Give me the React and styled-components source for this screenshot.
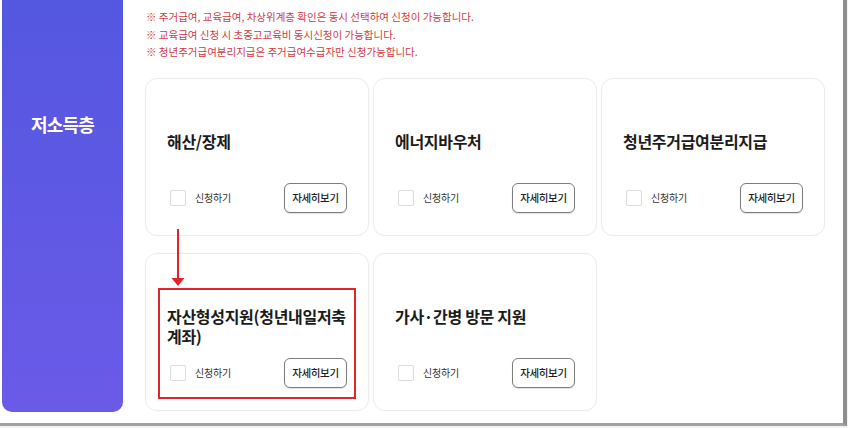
import React from 'react'
import styled, { createGlobalStyle } from 'styled-components'

const GlobalStyle = createGlobalStyle`
  html, body {
    margin: 0;
    padding: 0;
    background: #f2f2f2;
  }
  body {
    font-family: "Noto Sans CJK KR", "Noto Sans", sans-serif;
  }
`

const Frame = styled.div`
  width: 841px;
  height: 423px;
  display: flex;
  align-items: flex-start;
  gap: 22px;
  padding-left: 2px;
  background: #fff;
  border-right: 4px solid #8e8e8e;
  border-bottom: 3px solid #a2a2a2;
  overflow: hidden;
`

const Side = styled.aside`
  width: 121px;
  height: 412px;
  flex-shrink: 0;
  box-sizing: border-box;
  padding-top: 112px;
  border-radius: 0 0 10px 10px;
  background: linear-gradient(180deg, #5457e0 0%, #6a5ae8 100%);
  color: #fff;
  text-align: center;
  font-size: 18px;
  font-weight: 700;
  letter-spacing: -0.8px;
  line-height: 24px;
`

const Main = styled.section`
  flex: 1;
  padding-top: 8px;
`

const Notes = styled.ul`
  list-style: none;
  margin: 0 0 17px;
  padding: 0 0 0 1px;
  color: #d23a44;
  font-size: 10.5px;
  line-height: 17.5px;
  letter-spacing: 0;
`

const Board = styled.div`
  position: relative;
  width: 680px;
  display: grid;
  grid-template-columns: repeat(3, 1fr);
  grid-auto-rows: 158px;
  column-gap: 4px;
  row-gap: 17px;
`

const Card = styled.div`
  position: relative;
  box-sizing: border-box;
  display: flex;
  flex-direction: column;
  justify-content: space-between;
  padding: 52px 21px 22px 21px;
  background: #fff;
  border: 1px solid #ececec;
  border-radius: 12px;
  box-shadow: 0 0 2px rgba(0, 0, 0, 0.03);
`

const Title = styled.h3`
  margin: 0;
  color: #1b1b1b;
  font-size: 16px;
  font-weight: 700;
  line-height: 20px;
  letter-spacing: -0.3px;
`

const Footer = styled.div`
  display: flex;
  align-items: center;
  justify-content: space-between;
`

const Check = styled.label`
  display: flex;
  align-items: center;
  gap: 9px;
  padding-left: 3px;
  color: #333;
  font-size: 10px;
  letter-spacing: -0.2px;
`

const Box = styled.span`
  width: 16px;
  height: 16px;
  box-sizing: border-box;
  border: 1px solid #dcdcdc;
  border-radius: 2px;
  background: #fff;
`

const DetailButton = styled.button`
  width: 63px;
  height: 30px;
  padding: 0;
  border: 1px solid #7d7d7d;
  border-radius: 6px;
  background: #fff;
  box-shadow: 0 1px 1px rgba(0, 0, 0, 0.12);
  color: #1e1e1e;
  font-family: inherit;
  font-size: 10.5px;
  font-weight: 500;
  letter-spacing: -0.4px;
`

const Highlight = styled.div`
  position: absolute;
  top: 34px;
  left: 12px;
  right: 12px;
  bottom: 11px;
  border: 2px solid #e2232b;
  pointer-events: none;
`

const Arrow = styled.svg`
  position: absolute;
  left: 26px;
  top: 151px;
`

const notes = [
  '※ 주거급여, 교육급여, 차상위계층 확인은 동시 선택하여 신청이 가능합니다.',
  '※ 교육급여 신청 시 초중고교육비 동시신청이 가능합니다.',
  '※ 청년주거급여분리지급은 주거급여수급자만 신청가능합니다.',
]

const items = [
  { title: '해산/장제' },
  { title: '에너지바우처' },
  { title: '청년주거급여분리지급' },
  { title: '자산형성지원(청년내일저축계좌)', marked: true },
  { title: '가사·간병 방문 지원' },
]

function ServiceCard({ title, marked }) {
  return (
    <Card>
      {marked && <Highlight />}
      <Title>{title}</Title>
      <Footer>
        <Check>
          <Box />
          신청하기
        </Check>
        <DetailButton>자세히보기</DetailButton>
      </Footer>
    </Card>
  )
}

export default function App() {
  return (
    <>
      <GlobalStyle />
      <Frame>
        <Side>저소득층</Side>
        <Main>
          <Notes>
            {notes.map((n) => (
              <li key={n}>{n}</li>
            ))}
          </Notes>
          <Board>
            {items.map((it) => (
              <ServiceCard key={it.title} {...it} />
            ))}
            <Arrow width="14" height="58" viewBox="0 0 14 58">
              <line x1="7" y1="0" x2="7" y2="50" stroke="#e2232b" strokeWidth="2" />
              <polygon points="0.5,49 13.5,49 7,57" fill="#e2232b" />
            </Arrow>
          </Board>
        </Main>
      </Frame>
    </>
  )
}
